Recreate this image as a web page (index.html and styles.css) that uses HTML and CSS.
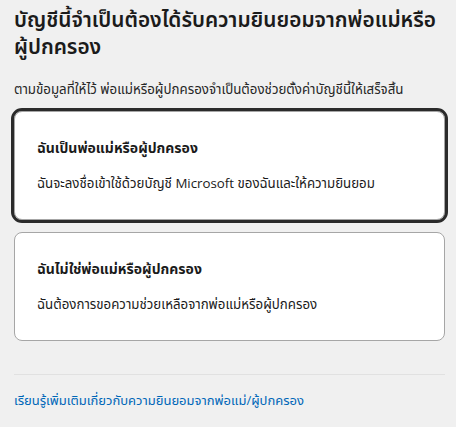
FILE: index.html
```html
<!DOCTYPE html>
<html lang="th">
<head>
<meta charset="utf-8">
<link rel="stylesheet" href="styles.css">
</head>
<body>
<main class="page">
  <h1 class="title">บัญชีนี้จำเป็นต้องได้รับความยินยอมจากพ่อแม่หรือ<span class="word">ผู้ปกครอง</span></h1>
  <p class="lead">ตามข้อมูลที่ให้ไว้ พ่อแม่หรือผู้ปกครองจำเป็นต้องช่วยตั้งค่าบัญชีนี้ให้เสร็จสิ้น</p>
  <div class="options">
    <div class="card selected">
      <div class="card-title">ฉันเป็นพ่อแม่หรือผู้ปกครอง</div>
      <div class="card-desc">ฉันจะลงชื่อเข้าใช้ด้วยบัญชี Microsoft ของฉันและให้ความยินยอม</div>
    </div>
    <div class="card">
      <div class="card-title">ฉันไม่ใช่พ่อแม่หรือผู้ปกครอง</div>
      <div class="card-desc">ฉันต้องการขอความช่วยเหลือจากพ่อแม่หรือผู้ปกครอง</div>
    </div>
  </div>
  <div class="footer">
    <a class="link" href="#">เรียนรู้เพิ่มเติมเกี่ยวกับความยินยอมจากพ่อแม่/ผู้ปกครอง</a>
  </div>
</main>
</body>
</html>
```

FILE: styles.css
```css
html, body {
  margin: 0;
  background: #f0f0f0;
}
body {
  font-family: "Open Sans", "Noto Sans Thai", sans-serif;
  color: #1b1b1b;
}
.page {
  width: 431px;
  padding: 6px 11px 0 14px;
}
.title {
  margin: 0;
  font-size: 20.8px;
  line-height: 27px;
  font-weight: 600;
  color: #1b1b1b;
}
.word {
  white-space: nowrap;
}
.lead {
  margin: 21px 0 0;
  font-size: 13.3px;
  line-height: 16px;
  color: #262626;
}
.options {
  margin-top: 14px;
  display: flex;
  flex-direction: column;
  gap: 12px;
}
.card {
  background: #fff;
  border: 1px solid #a6a6a6;
  border-radius: 8px;
  padding: 28px 22px 28px 22px;
  display: flex;
  flex-direction: column;
  gap: 19px;
}
.card.selected {
  outline: 3px solid #2b2b2b;
  outline-offset: 0;
}
.card-title {
  font-size: 14px;
  line-height: 16px;
  font-weight: 700;
  color: #1b1b1b;
}
.card-desc {
  font-size: 13.3px;
  line-height: 16px;
  color: #1b1b1b;
}
.footer {
  margin-top: 33px;
  border-top: 1px solid #e1e1e1;
  padding-top: 13px;
}
.link {
  font-size: 13px;
  line-height: 16px;
  color: #0067b8;
  text-decoration: none;
}
```
